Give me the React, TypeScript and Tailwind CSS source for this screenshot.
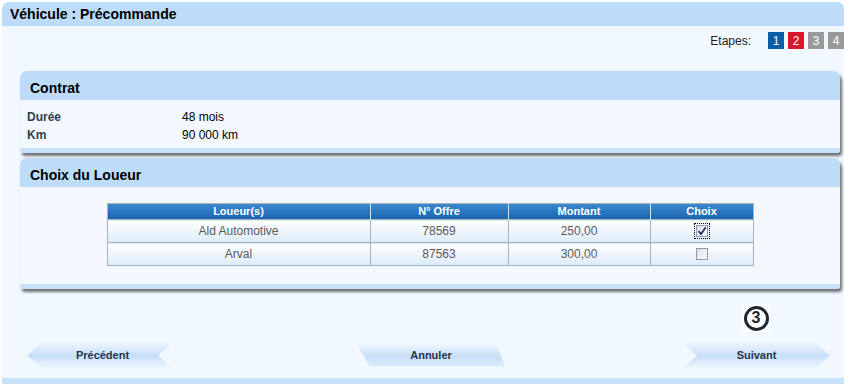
import React from "react";

const rows = [
  { loueur: "Ald Automotive", offre: "78569", montant: "250,00", checked: true },
  { loueur: "Arval", offre: "87563", montant: "300,00", checked: false },
];

function Checkbox({ checked }: { checked: boolean }) {
  return (
    <span
      className={
        "inline-flex items-center justify-center p-[1px] " +
        (checked ? "outline outline-1 outline-dotted outline-black" : "")
      }
    >
      <span className="flex h-[12px] w-[12px] items-center justify-center border border-[#8e9aa6] bg-gradient-to-br from-[#dcdfe3] to-[#fbfbfc]">
        {checked && (
          <svg width="10" height="10" viewBox="0 0 10 10">
            <path d="M1.5 5.2 L4 8 L8.8 1.2" fill="none" stroke="#27326a" strokeWidth="1.8" />
          </svg>
        )}
      </span>
    </span>
  );
}

function Panel({ title, children }: { title: string; children: React.ReactNode }) {
  return (
    <div className="ml-[18px] mr-[4px] rounded-t-[7px] rounded-b-[3px] bg-[#f3f8ff] shadow-[2px_3px_3px_rgba(0,0,0,0.55)]">
      <div className="flex h-[29px] items-center rounded-t-[7px] bg-[#bcdcf9] pl-[10px] pt-[5px] text-[14px] font-bold text-black">
        {title}
      </div>
      {children}
      <div className="h-[5px] rounded-b-[3px] bg-[#c6e1f9]" />
    </div>
  );
}

export default function App() {
  return (
    <div className="relative h-[384px] w-[850px] overflow-hidden bg-white font-['Liberation_Sans',Arial,sans-serif]">
      <div className="ml-[2px] mt-[2px] h-[382px] w-[842px] overflow-hidden rounded-t-[7px] bg-[#f2f8ff]">
        <div className="flex h-[24px] items-center bg-[#bcdcf9] pl-[8px] text-[14px] font-bold text-black">
          Véhicule : Précommande
        </div>

        <div className="mt-[6px] flex h-[17px] items-center justify-end text-[12px] text-[#222]">
          <span className="mr-[17px]">Etapes:</span>
          <div className="flex gap-[4px] text-[12px] text-white">
            <span className="flex h-[17px] w-[16px] items-center justify-center bg-[#0a5ea6]">1</span>
            <span className="flex h-[17px] w-[16px] items-center justify-center bg-[#d8182a]">2</span>
            <span className="flex h-[17px] w-[16px] items-center justify-center bg-[#999999]">3</span>
            <span className="flex h-[17px] w-[16px] items-center justify-center bg-[#999999]">4</span>
          </div>
        </div>

        <div className="mt-[22px]">
          <Panel title="Contrat">
            <div className="px-[7px] pb-[4px] pt-[8px] text-[12px]">
              <div className="flex h-[18px] items-center">
                <span className="w-[155px] font-bold text-[#34404d]">Durée</span>
                <span className="text-black">48 mois</span>
              </div>
              <div className="flex h-[18px] items-center">
                <span className="w-[155px] font-bold text-[#34404d]">Km</span>
                <span className="text-black">90 000 km</span>
              </div>
            </div>
          </Panel>
        </div>

        <div className="mt-[5px]">
          <Panel title="Choix du Loueur">
            <div className="flex justify-center pb-[18px] pt-[16px]">
              <table className="w-[647px] border-collapse border border-[#a9b2bb] text-[12px] text-[#5a5a5a]">
                <thead>
                  <tr className="h-[15px] bg-gradient-to-b from-[#3a88d0] to-[#1763ad] text-[11px] font-bold text-white">
                    <th className="w-[263px] border-r border-[#d4e3f2] font-bold leading-[15px]">Loueur(s)</th>
                    <th className="w-[138px] border-r border-[#d4e3f2] font-bold leading-[15px]">N° Offre</th>
                    <th className="w-[142px] border-r border-[#d4e3f2] font-bold leading-[15px]">Montant</th>
                    <th className="font-bold leading-[15px]">Choix</th>
                  </tr>
                </thead>
                <tbody>
                  {rows.map((r) => (
                    <tr
                      key={r.offre}
                      className="h-[23px] border-t border-[#a9b2bb] bg-gradient-to-b from-[#ffffff] to-[#dbebf9] text-center"
                    >
                      <td className="border-r border-[#a9b2bb]">{r.loueur}</td>
                      <td className="border-r border-[#a9b2bb]">{r.offre}</td>
                      <td className="border-r border-[#a9b2bb]">{r.montant}</td>
                      <td className="align-middle">
                        <div className="flex items-center justify-center">
                          <Checkbox checked={r.checked} />
                        </div>
                      </td>
                    </tr>
                  ))}
                </tbody>
              </table>
            </div>
          </Panel>
        </div>

        <div className="mt-[15px] flex justify-end pr-[74px]">
          <span className="flex h-[28px] w-[28px] items-center justify-center bg-white">
            <span className="flex h-[25px] w-[25px] items-center justify-center rounded-full border-[3px] border-[#1c2731] text-[16px] font-bold leading-none text-[#1c2731]">
              3
            </span>
          </span>
        </div>

        <div className="mt-[11px] flex items-center pl-[25px] text-[11px] font-bold text-[#1f3550]">
          <button className="flex h-[25px] w-[145px] items-center justify-center bg-gradient-to-b from-[#edf5fd] via-[#c6dff8] to-[#edf5fd] pl-[6px] [clip-path:polygon(0_50%,15px_0,100%_0,131px_50%,100%_100%,15px_100%)]">
            Précédent
          </button>
          <button className="ml-[185px] flex h-[22px] w-[148px] items-center justify-center bg-gradient-to-b from-[#edf5fd] via-[#c6dff8] to-[#dcecfb] [clip-path:polygon(0_0,140px_0,100%_100%,13px_100%)]">
            Annuler
          </button>
          <button className="ml-[178px] flex h-[25px] w-[147px] items-center justify-center bg-gradient-to-b from-[#edf5fd] via-[#c6dff8] to-[#edf5fd] [clip-path:polygon(0_0,132px_0,100%_50%,132px_100%,0_100%,14px_50%)]">
            Suivant
          </button>
        </div>
      </div>
      <div className="absolute bottom-0 left-[2px] h-[6px] w-[842px] bg-[#c6e1f9]" />
    </div>
  );
}
